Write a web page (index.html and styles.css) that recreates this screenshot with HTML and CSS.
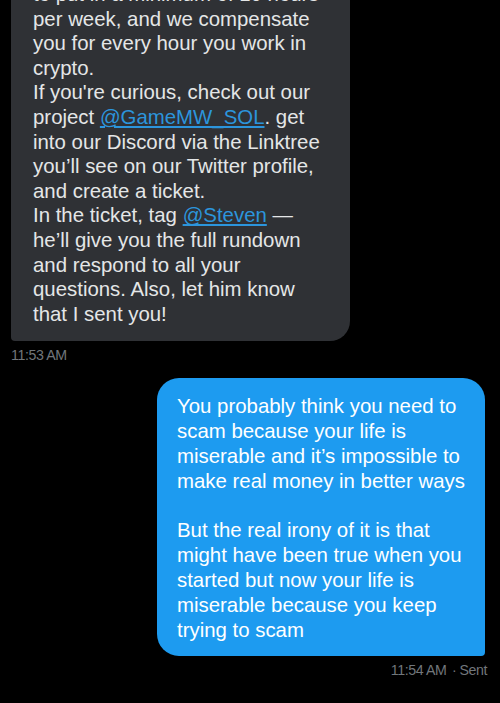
FILE: index.html
```html
<!DOCTYPE html>
<html lang="en">
<head>
<meta charset="utf-8">
<title>Messages</title>
<link rel="stylesheet" href="styles.css">
</head>
<body>
<main class="chat">
  <div class="msg msg-in">
    <div class="bubble bubble-in">
      to put in a minimum of 10 hours<br>
      per week, and we compensate<br>
      you for every hour you work in<br>
      crypto.<br>
      If you're curious, check out our<br>
      project <a class="mention" href="#">@GameMW_SOL</a>. get<br>
      into our Discord via the Linktree<br>
      you’ll see on our Twitter profile,<br>
      and create a ticket.<br>
      In the ticket, tag <a class="mention" href="#">@Steven</a> —<br>
      he’ll give you the full rundown<br>
      and respond to all your<br>
      questions. Also, let him know<br>
      that I sent you!
    </div>
    <div class="meta">11:53 AM</div>
  </div>
  <div class="msg msg-out">
    <div class="bubble bubble-out">
      You probably think you need to<br>
      scam because your life is<br>
      miserable and it’s impossible to<br>
      make real money in better ways<br>
      <br>
      But the real irony of it is that<br>
      might have been true when you<br>
      started but now your life is<br>
      miserable because you keep<br>
      trying to scam
    </div>
    <div class="meta meta-out">11:54 AM <span class="dot">·</span>Sent</div>
  </div>
</main>
</body>
</html>
```

FILE: styles.css
```css
html, body {
  margin: 0;
  padding: 0;
  background: #000;
}
body {
  width: 500px;
  height: 703px;
  overflow: hidden;
  font-family: "Liberation Sans", Arial, sans-serif;
}
.chat {
  display: flex;
  flex-direction: column;
  padding: 0 13px 0 11px;
}
.msg {
  display: flex;
  flex-direction: column;
}
.msg-in {
  align-items: flex-start;
  margin-top: -34px;
}
.msg-out {
  align-items: flex-end;
  margin-top: 15px;
}
.bubble {
  font-size: 20.4px;
  white-space: nowrap;
}
.bubble-in {
  width: 339px;
  box-sizing: border-box;
  background: #2f3135;
  color: #e4e6e7;
  line-height: 24.6px;
  padding: 16px 10px 15px 22px;
  border-radius: 22px 22px 20px 4px;
}
.bubble-out {
  width: 328px;
  box-sizing: border-box;
  background: #1d9bf0;
  color: #fff;
  line-height: 24.9px;
  padding: 15.5px 8px 13.5px 20px;
  border-radius: 22px 22px 4px 22px;
  margin-right: 2px;
}
.mention {
  color: #2c95dc;
  text-decoration: underline;
  text-underline-offset: 2px;
}
.meta {
  margin-top: 6px;
  font-size: 14.2px;
  line-height: 16px;
  color: #71767b;
  letter-spacing: -0.4px;
}
.dot {
  margin: 0 3px 0 2px;
}
```
